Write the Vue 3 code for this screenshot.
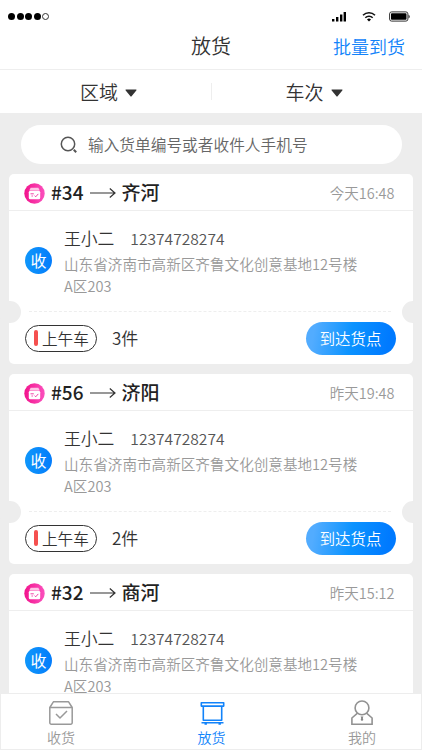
<template>
    <div class="page">
        <!-- Status bar -->
        <div class="status">
            <div class="status__dots">
                <i v-for="n in 5" :key="n" :class="{ empty: n == 5 }"></i>
            </div>
            <div class="status__icons">
                <svg class="signal" width="15" height="11" viewBox="0 0 15 11">
                    <path d="M0 8h2.4v2.5H0zM4 6h2.4v4.5H4zM8 3.5h2.4v7H8zM11.6 1H14v9.5h-2.4z" />
                </svg>
                <svg class="wifi" width="14" height="11" viewBox="0 0 14 11">
                    <path d="M1 4.2a8.6 8.6 0 0 1 12 0M3.3 6.7a5.3 5.3 0 0 1 7.4 0" fill="none" stroke="#111" stroke-width="1.6" />
                    <path d="M5 8.5a2.9 2.9 0 0 1 4 0L7 10.6z" />
                </svg>
                <svg class="battery" width="21" height="11" viewBox="0 0 21 11">
                    <rect x=".6" y=".9" width="18.3" height="9.2" rx="2" fill="none" stroke="#333" />
                    <rect x="2" y="2.3" width="15.5" height="6.4" rx=".8" />
                    <path d="M19.6 3.7c1.4.4 1.4 3.2 0 3.6z" />
                </svg>
            </div>
        </div>

        <!-- Title -->
        <header class="header">
            <span></span>
            <h1>放货</h1>
            <a>批量到货</a>
        </header>

        <!-- Filters -->
        <div class="filters">
            <div v-for="item in filters" :key="item" class="filters__item">
                <span>{{ item }}</span>
                <svg width="12" height="8" viewBox="0 0 12 8"><path d="M1.2.5h9.6c.7 0 .9.6.5 1.1L6.8 6.9a1 1 0 0 1-1.6 0L.7 1.6C.3 1.1.5.5 1.2.5z" fill="#333" /></svg>
            </div>
        </div>

        <main class="content">
            <div class="search">
                <svg width="18" height="18" viewBox="0 0 18 18" fill="none" stroke="#555" stroke-width="1.5">
                    <circle cx="8" cy="8" r="6.7" />
                    <path d="M13.8 13.8l2.4 2.4" stroke-width="2" />
                </svg>
                <span>输入货单编号或者收件人手机号</span>
            </div>

            <section v-for="item in orders" :key="item.no" class="card">
                <div class="card__head">
                    <svg class="card__logo" width="21" height="21" viewBox="0 0 21 21">
                        <defs>
                            <linearGradient :id="'pink' + item.no" x1="0" x2="1">
                                <stop offset="0" stop-color="#f2138c" />
                                <stop offset="1" stop-color="#fb50bd" />
                            </linearGradient>
                        </defs>
                        <circle cx="10.5" cy="10.5" r="10.2" :fill="`url(#pink${item.no})`" />
                        <path d="M6.7 4.8h7.6l1.5 2.6H5.2z" fill="#ffc4e6" />
                        <rect x="4.8" y="7.8" width="11.4" height="8.4" rx="1.5" fill="#fff" />
                        <path d="M6.5 10.8h3.3M7.5 13h1.4M10.5 12.6l1.2 1.2 2.6-2.9" fill="none" stroke="#f02b9d" stroke-width=".9" />
                    </svg>
                    <b>#{{ item.no }}</b>
                    <svg class="card__arrow" width="26" height="12" viewBox="0 0 26 12" fill="none" stroke="#333" stroke-width="1.2">
                        <path d="M0 6h25M19.8 1.5L25 6l-5.2 4.5" />
                    </svg>
                    <b class="card__city">{{ item.city }}</b>
                    <time>{{ item.time }}</time>
                </div>
                <div class="card__body">
                    <div class="card__tag">收</div>
                    <div class="card__info">
                        <div class="card__user"><span>王小二</span><em>12374728274</em></div>
                        <p>山东省济南市高新区齐鲁文化创意基地12号楼<br>A区203</p>
                    </div>
                </div>
                <template v-if="item.count">
                    <div class="card__line"></div>
                    <div class="card__foot">
                        <div class="card__bus"><i></i>上午车</div>
                        <span>{{ item.count }}件</span>
                        <button>到达货点</button>
                    </div>
                </template>
            </section>
        </main>

        <!-- Tab bar -->
        <nav class="tabs">
            <a>
                <svg width="26" height="26" viewBox="0 0 26 26" fill="none" stroke="#999" stroke-width="1.5" stroke-linejoin="round">
                    <path d="M1.8 7.5L5.4 1.8h15.2l3.6 5.7v15.2a1.5 1.5 0 0 1-1.5 1.5H3.3a1.5 1.5 0 0 1-1.5-1.5zM1.8 7.5h22.4M8 14l4 4 7-7" />
                </svg>
                <span>收货</span>
            </a>
            <a class="active">
                <svg width="28" height="26" viewBox="0 0 28 26" fill="none" stroke="#1283fa" stroke-width="1.6" stroke-linejoin="round">
                    <path d="M3.3 2.7h22.4v3.4H3.3zM5.3 6.1v14.2h18.4V6.1M3.5 22.8h22" />
                    <path d="M6.5 23.8h2.4M20.500 23.800h2.400" stroke-width="2" />
                </svg>
                <span>放货</span>
            </a>
            <a>
                <svg width="24" height="26" viewBox="0 0 24 26" fill="none" stroke="#929292" stroke-width="1.6">
                    <circle cx="12" cy="7.9" r="6.9" />
                    <path d="M7.500 13.200L1.900 18v6.200h20.200V18l-5.600-4.800" />
                    <path d="M10.600 16.500h2.800l-.6 1.400.5 2-1.300 1.200-1.300-1.200.5-2z" fill="#888" stroke="none" />
                </svg>
                <span>我的</span>
            </a>
        </nav>
    </div>
</template>

<script setup>
import { ref } from 'vue'

const filters = ref(['区域', '车次'])

const orders = ref([
    { no: 34, city: '齐河', time: '今天16:48', count: 3 },
    { no: 56, city: '济阳', time: '昨天19:48', count: 2 },
    { no: 32, city: '商河', time: '昨天15:12' },
])
</script>

<style>
body{
    margin: 0;
    overflow: hidden;
}
</style>

<style scoped>
.page{
    display: flex;
    flex-direction: column;
    width: 422px;
    height: 750px;
    overflow: hidden;
    background: #fff;
    color: #333;
    font-family: "Noto Sans CJK SC", "Noto Sans", sans-serif;
    font-weight: 350;
}
.page *{
    box-sizing: border-box;
}
svg{
    display: block;
    flex: none;
}

/* status bar */
.status{
    flex: none;
    height: 26px;
    padding: 6px 12px 0 8px;
    display: flex;
    justify-content: space-between;
    align-items: center;
}
.status__dots{
    display: flex;
    gap: 1.5px;
}
.status__dots i{
    width: 7px;
    height: 7px;
    border-radius: 50%;
    background: #000;
}
.status__dots i.empty{
    background: #fff;
    border: 1px solid #333;
}
.status__icons{
    display: flex;
    align-items: center;
}
.wifi{
    margin: 0 13px 0 15px;
}

/* header */
.header{
    flex: none;
    height: 44px;
    padding: 0 17px;
    display: grid;
    grid-template-columns: 1fr auto 1fr;
    border-bottom: 1px solid #eee;
    line-height: 40px;
}
.header h1{
    margin: 0;
    font-size: 20px;
    font-weight: 350;
}
.header a{
    text-align: right;
    font-size: 18px;
    color: #1283fa;
}

/* filters */
.filters{
    flex: none;
    height: 43px;
    display: flex;
    align-items: center;
}
.filters__item{
    width: 50%;
    display: flex;
    align-items: center;
    justify-content: center;
    gap: 7px;
    padding-left: 6px;
    height: 17px;
    font-size: 19px;
    line-height: 28px;
}
.filters__item + .filters__item{
    padding: 0 6px 0 0;
    border-left: 1px solid #eee;
}
.filters__item svg{
    margin-top: 2px;
}

/* list */
.content{
    flex: 1;
    min-height: 0;
    overflow: hidden;
    background: #ededed;
    padding: 12px 9.5px 0 9px;
}
.search{
    height: 39px;
    margin: 0 11px 10px 12px;
    padding-left: 39px;
    border-radius: 20px;
    background: #fff;
    display: flex;
    align-items: center;
    gap: 10px;
    font-size: 15.7px;
    color: #666;
}
.card{
    position: relative;
    height: 190px;
    margin-bottom: 10px;
    border-radius: 5px;
    background: #fff;
}
.card__head{
    height: 37px;
    padding: 2px 18px 0 15px;
    display: flex;
    align-items: center;
    border-bottom: 1px solid #eee;
}
.card__head b{
    margin: -2px 0 0 6px;
    font-size: 19px;
    font-weight: 500;
    line-height: 34px;
    color: #222;
}
.card__arrow{
    margin-left: 6px;
}
.card__head time{
    margin: -1px 0 0 auto;
    font-size: 14.5px;
    color: #999;
}
.card__body{
    height: 100px;
    padding: 14px 0 0 16px;
    display: flex;
}
.card__tag{
    flex: none;
    width: 27px;
    height: 27px;
    margin-top: 22px;
    border-radius: 50%;
    background: linear-gradient(90deg, #0f96fb, #047dfb);
    color: #fff;
    font-size: 16px;
    font-weight: 400;
    line-height: 26px;
    text-align: center;
}
.card__info{
    margin-left: 12px;
}
.card__user{
    height: 28px;
    display: flex;
    gap: 16px;
    font-size: 16.8px;
    line-height: 26px;
}
.card__user em{
    font-style: normal;
    font-size: 15.6px;
    color: #555;
}
.card__info p{
    margin: 0;
    font-size: 14.6px;
    line-height: 21.5px;
    white-space: nowrap;
    color: #999;
}
.card__line{
    margin: 0 22px 0 20px;
    border-top: 1px dashed #eee;
}
/* ticket notches */
.card__line::before,
.card__line::after{
    content: "";
    position: absolute;
    top: 127px;
    left: -10px;
    width: 22px;
    height: 22px;
    border-radius: 50%;
    background: #ededed;
}
.card__line::after{
    left: auto;
    right: -11px;
}
.card__foot{
    height: 52px;
    padding: 0 17px 0 16px;
    display: flex;
    align-items: center;
}
.card__bus{
    width: 72px;
    height: 27px;
    padding-left: 8px;
    display: flex;
    align-items: center;
    gap: 4px;
    border: 1px solid #333;
    border-radius: 14px;
    font-size: 15.6px;
    line-height: 24px;
    white-space: nowrap;
}
.card__bus i{
    width: 4px;
    height: 16px;
    border-radius: 2px;
    background: #f5504f;
}
.card__foot span{
    margin: -1px 0 0 15px;
    font-size: 17px;
}
.card__foot button{
    margin-left: auto;
    width: 90px;
    height: 33px;
    padding: 0 0 1px;
    border: 0;
    border-radius: 17px;
    background: linear-gradient(100deg, #52acff 10%, #0b93ff 50%, #007aff 90%);
    color: #fff;
    font-family: inherit;
    font-size: 15.4px;
    font-weight: 350;
}

/* tab bar */
.tabs{
    flex: none;
    height: 57px;
    padding: 6px 0 0 1px;
    display: flex;
    justify-content: space-between;
    border: 1px solid #ededed;
    background: #fff;
}
.tabs a{
    width: 118px;
    display: flex;
    flex-direction: column;
    align-items: center;
    font-size: 14px;
    line-height: 22px;
    color: #999;
}
.tabs a.active{
    color: #1283fa;
}
</style>
